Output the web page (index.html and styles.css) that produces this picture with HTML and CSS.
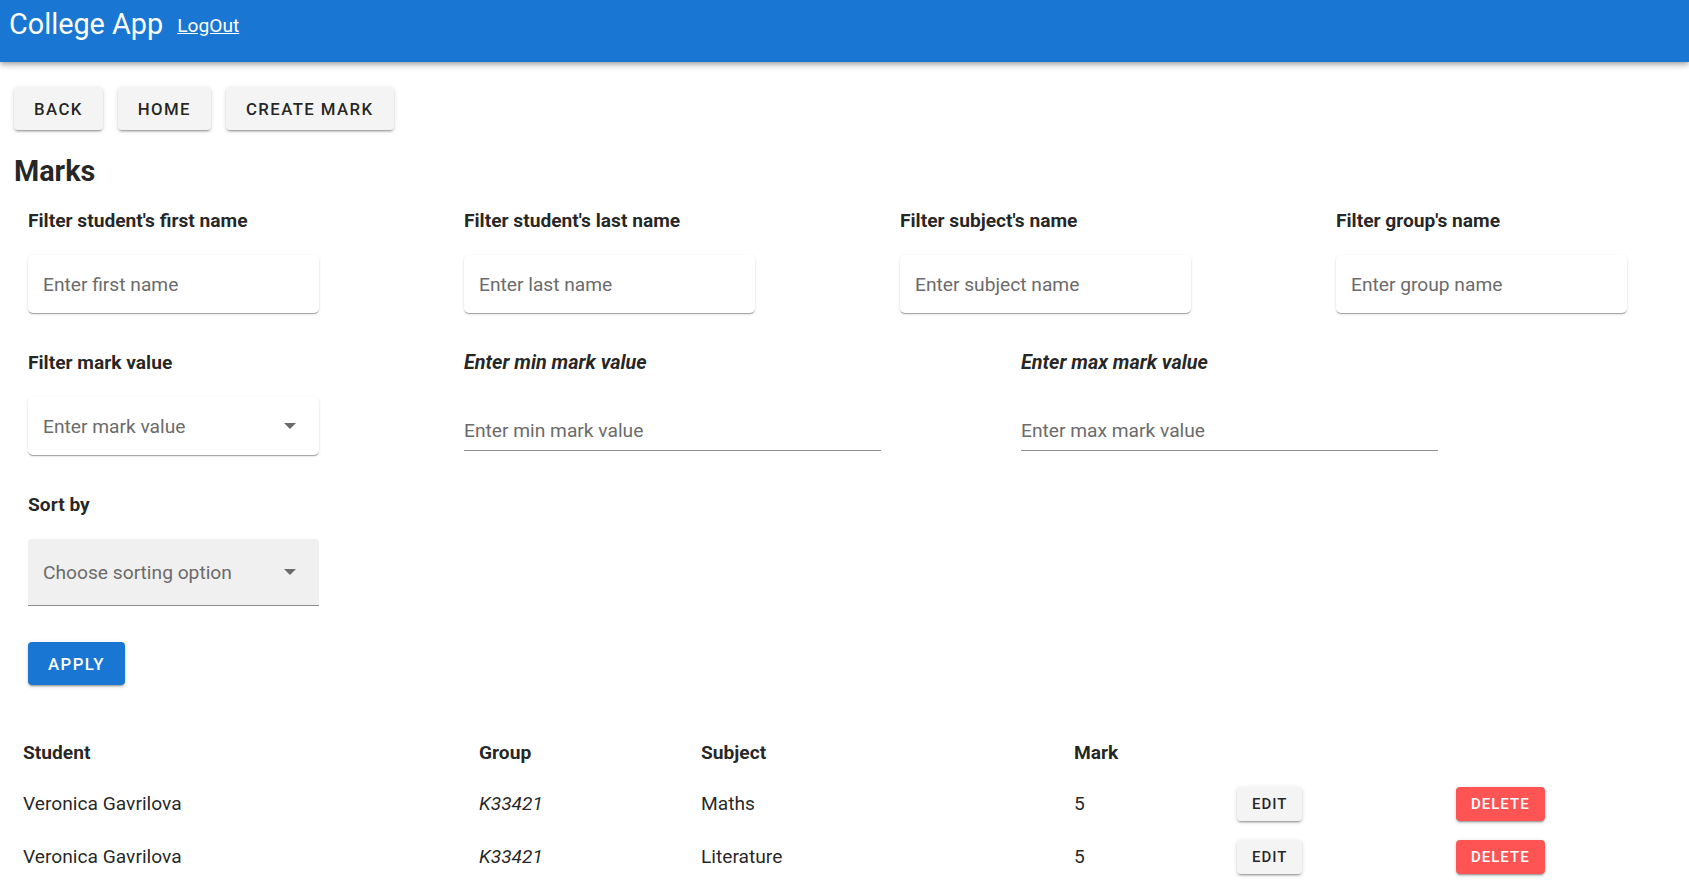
FILE: index.html
```html
<!DOCTYPE html>
<html lang="en">
<head>
<meta charset="utf-8">
<title>College App</title>
<link rel="stylesheet" href="styles.css">
</head>
<body>
<header class="appbar">
  <span class="brand">College App</span>
  <a class="logout" href="#">LogOut</a>
</header>
<main class="page">
  <nav class="actions">
    <button class="btn">Back</button>
    <button class="btn">Home</button>
    <button class="btn">Create mark</button>
  </nav>
  <h1 class="title">Marks</h1>
  <section class="filters">
    <div class="grid4">
      <div class="field">
        <label class="label">Filter student's first name</label>
        <input class="box" type="text" placeholder="Enter first name">
      </div>
      <div class="field">
        <label class="label">Filter student's last name</label>
        <input class="box" type="text" placeholder="Enter last name">
      </div>
      <div class="field">
        <label class="label">Filter subject's name</label>
        <input class="box" type="text" placeholder="Enter subject name">
      </div>
      <div class="field">
        <label class="label">Filter group's name</label>
        <input class="box" type="text" placeholder="Enter group name">
      </div>
    </div>
    <div class="range-row">
      <div class="field mark-field">
        <label class="label">Filter mark value</label>
        <div class="box select">
          <span class="ph">Enter mark value</span>
          <svg class="arrow" width="12" height="6" viewBox="0 0 12 6"><path d="M0 0h12L6 6z" fill="#6b6b6b"/></svg>
        </div>
      </div>
      <div class="field range-field">
        <label class="label italic">Enter min mark value</label>
        <input class="line-input" type="text" placeholder="Enter min mark value">
      </div>
      <div class="field range-field">
        <label class="label italic">Enter max mark value</label>
        <input class="line-input" type="text" placeholder="Enter max mark value">
      </div>
    </div>
    <div class="field sort-field">
      <label class="label">Sort by</label>
      <div class="filled select">
        <span class="ph">Choose sorting option</span>
        <svg class="arrow" width="12" height="6" viewBox="0 0 12 6"><path d="M0 0h12L6 6z" fill="#6b6b6b"/></svg>
      </div>
    </div>
    <button class="btn primary">Apply</button>
  </section>
  <div class="table">
    <div class="row head">
      <div>Student</div><div>Group</div><div>Subject</div><div>Mark</div><div></div><div></div>
    </div>
    <div class="row">
      <div>Veronica Gavrilova</div><div class="grp">K33421</div><div>Maths</div><div>5</div>
      <div><button class="sbtn">Edit</button></div>
      <div><button class="sbtn danger">Delete</button></div>
    </div>
    <div class="row">
      <div>Veronica Gavrilova</div><div class="grp">K33421</div><div>Literature</div><div>5</div>
      <div><button class="sbtn">Edit</button></div>
      <div><button class="sbtn danger">Delete</button></div>
    </div>
  </div>
</main>
</body>
</html>
```

FILE: styles.css
```css
* { box-sizing: border-box; }
html, body { margin: 0; background: #fff; }
body {
  font-family: Roboto, "Liberation Sans", Arial, sans-serif;
  color: rgba(0, 0, 0, 0.87);
  overflow: hidden;
}

.appbar {
  height: 62px;
  background: #1976d2;
  color: #fff;
  display: flex;
  align-items: flex-start;
  padding: 7px 9px 0;
  box-shadow: 0 2px 4px -1px rgba(0,0,0,.2), 0 4px 5px 0 rgba(0,0,0,.14), 0 1px 10px 0 rgba(0,0,0,.12);
  position: relative;
}
.brand { font-size: 28.8px; line-height: 34.5px; }
.logout {
  color: #fff;
  font-size: 19.2px;
  line-height: 23px;
  margin: 7px 0 0 14px;
  text-decoration: underline;
}

.page { padding: 25px 14px 0; }

.actions { display: flex; gap: 15px; }

.btn {
  height: 43px;
  padding: 0 20px;
  border: 0;
  border-radius: 4px;
  font-family: Roboto, "Liberation Sans", sans-serif;
  font-weight: 500;
  font-size: 16.8px;
  letter-spacing: 1.4px;
  text-transform: uppercase;
  background: #f4f4f4;
  color: rgba(0, 0, 0, 0.87);
  box-shadow: 0 3px 1px -2px rgba(0,0,0,.2), 0 2px 2px 0 rgba(0,0,0,.14), 0 1px 5px 0 rgba(0,0,0,.12);
}
.btn.primary { background: #1976d2; color: #fff; margin-top: 36px; padding: 0 20px; }

.title {
  margin: 24px 0 0;
  font-size: 28.8px;
  line-height: 34px;
  font-weight: 700;
}

.filters { padding-left: 14px; margin-top: 21px; }

.grid4 { display: grid; grid-template-columns: repeat(4, 436px); }

.field { display: flex; flex-direction: column; align-items: flex-start; }

.label {
  display: block;
  font-weight: 700;
  font-size: 19.2px;
  line-height: 24px;
  margin-bottom: 22px;
}
.label.italic { font-style: italic; font-size: 19.8px; }

.box {
  width: 291px;
  height: 58px;
  border: 0;
  border-radius: 5px;
  background: #fff;
  padding: 0 15px;
  font-family: Roboto, "Liberation Sans", sans-serif;
  font-size: 19.2px;
  color: rgba(0,0,0,.87);
  outline: none;
  box-shadow: 0 2px 1px -1px rgba(0,0,0,.2), 0 1px 1px 0 rgba(0,0,0,.14), 0 1px 3px 0 rgba(0,0,0,.12);
}
.box::placeholder, .line-input::placeholder { color: #6b6b6b; opacity: 1; }

.select {
  display: flex;
  align-items: center;
  justify-content: space-between;
  padding: 0 23px 0 15px;
}
.ph { color: #6b6b6b; font-size: 19.2px; }

.range-row { display: flex; margin-top: 38px; }
.mark-field { width: 436px; }
.range-field { width: 417px; margin-right: 140px; }

.line-input {
  display: block;
  width: 417px;
  padding: 22px 0 8px;
  border: 0;
  border-bottom: 1px solid #8f8f8f;
  font-family: Roboto, "Liberation Sans", sans-serif;
  font-size: 19.2px;
  line-height: 23px;
  outline: none;
  background: transparent;
}

.sort-field { margin-top: 38px; }
.filled {
  width: 291px;
  height: 67px;
  background: #f0f0f0;
  border-radius: 4px 4px 0 0;
  border-bottom: 1px solid #8c8c8c;
}

.table { margin: 43px 0 0 9px; }
.row {
  display: grid;
  grid-template-columns: 456px 222px 373px 163px 219px 1fr;
  align-items: center;
  height: 53px;
  font-size: 19.2px;
}
.row.head { height: 49px; font-weight: 700; font-size: 19.2px; }
.grp { font-style: italic; }

.sbtn {
  height: 34px;
  padding: 0 15px;
  border: 0;
  border-radius: 4px;
  font-family: Roboto, "Liberation Sans", sans-serif;
  font-weight: 500;
  font-size: 15px;
  letter-spacing: 1px;
  text-transform: uppercase;
  background: #f4f4f4;
  color: rgba(0,0,0,.87);
  box-shadow: 0 3px 1px -2px rgba(0,0,0,.2), 0 2px 2px 0 rgba(0,0,0,.14), 0 1px 5px 0 rgba(0,0,0,.12);
}
.sbtn.danger { background: #ff5454; color: #fff; }
```
